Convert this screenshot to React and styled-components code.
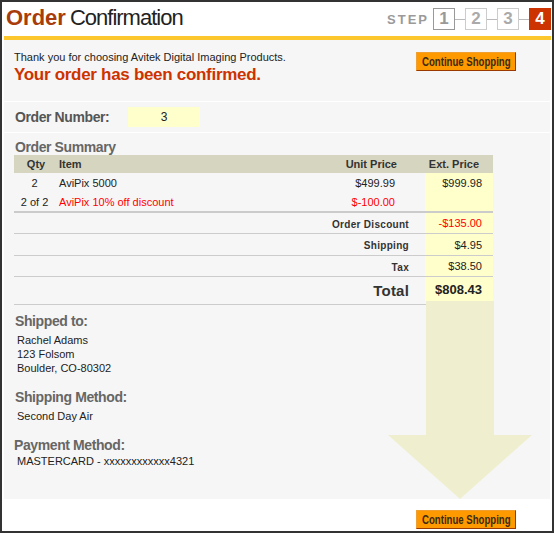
import React from "react";
import styled, { createGlobalStyle } from "styled-components";

const GlobalStyle = createGlobalStyle`
  body {
    margin: 0;
    background: #fff;
    font-family: "Liberation Sans", Arial, Helvetica, sans-serif;
  }
`;

const Frame = styled.div`
  width: 554px;
  height: 533px;
  box-sizing: border-box;
  border: 2px solid #333;
  background: #fff;
  display: flex;
  flex-direction: column;
`;

const Header = styled.div`
  height: 34px;
  flex-shrink: 0;
  display: flex;
  align-items: center;
  justify-content: space-between;
  padding: 0 1px 2px 4px;
  box-sizing: border-box;
`;

const Title = styled.h1`
  margin: 0;
  font-size: 22px;
  line-height: 24px;
  font-weight: normal;
  color: #222;
  letter-spacing: -1px;
  span {
    font-weight: bold;
    color: #a83c0a;
    letter-spacing: 0;
    margin-right: 4px;
  }
`;

const Steps = styled.div`
  display: flex;
  align-items: center;
  padding-top: 2px;
`;

const StepLabel = styled.span`
  font-size: 13px;
  font-weight: bold;
  color: #9a9a9a;
  letter-spacing: 2px;
  margin-right: 4px;
`;

const StepBox = styled.div`
  width: 22px;
  height: 22px;
  box-sizing: border-box;
  display: flex;
  align-items: center;
  justify-content: center;
  font-size: 17px;
  font-weight: bold;
  border: 1px solid ${(p) => (p.$active ? "#cc3300" : p.$done ? "#999" : "#ccc")};
  background: ${(p) => (p.$active ? "#cc3300" : "#fff")};
  color: ${(p) => (p.$active ? "#fff" : p.$done ? "#999" : "#aaa")};
`;

const Connector = styled.div`
  width: 10px;
  height: 1px;
  background: #bbb;
`;

const YellowBar = styled.div`
  height: 4px;
  flex-shrink: 0;
  margin: 0 1px 0 2px;
  background: #fcc72c;
`;

const Content = styled.div`
  flex: 1;
  margin: 0 2px;
  background: #f6f6f6;
  position: relative;
  display: flex;
  flex-direction: column;
`;

const Intro = styled.div`
  height: 62px;
  box-sizing: border-box;
  border-bottom: 1px solid #fff;
  display: flex;
  justify-content: space-between;
  align-items: flex-start;
  padding: 10px 34px 0 10px;
`;

const ThankYou = styled.div`
  font-size: 11px;
  line-height: 14px;
  color: #222;
`;

const Confirmed = styled.div`
  margin-top: 1px;
  font-size: 17px;
  line-height: 20px;
  font-weight: bold;
  color: #cc3300;
  letter-spacing: -0.3px;
`;

const ShopButton = styled.button`
  width: 100px;
  height: 19px;
  box-sizing: border-box;
  margin-top: ${(p) => p.$offset || 0}px;
  padding: 0;
  background: #ff9900;
  border: 1px solid;
  border-color: #f0a030 #9a3a00 #9a3a00 #f0a030;
  display: flex;
  align-items: center;
  justify-content: center;
  overflow: hidden;
  cursor: pointer;
`;

const ShopLabel = styled.span`
  display: inline-block;
  white-space: nowrap;
  font-family: "Liberation Sans", Arial, sans-serif;
  font-size: 12px;
  font-weight: bold;
  color: #3a2a10;
  transform: scaleX(0.8);
`;

const OrderNumberRow = styled.div`
  height: 31px;
  box-sizing: border-box;
  border-bottom: 1px solid #fff;
  display: flex;
  align-items: center;
  padding-left: 11px;
`;

const SectionTitle = styled.div`
  font-size: 14px;
  font-weight: bold;
  color: ${(p) => p.$color || "#666"};
  letter-spacing: -0.4px;
  line-height: ${(p) => p.$lh || 16}px;
  margin-top: ${(p) => p.$mt || 0}px;
  margin-left: ${(p) => p.$ml || 0}px;
  width: ${(p) => (p.$width ? `${p.$width}px` : "auto")};
`;

const NumberBox = styled.div`
  width: 72px;
  height: 20px;
  background: #ffffcc;
  display: flex;
  align-items: center;
  justify-content: center;
  font-size: 12px;
  color: #222;
`;

const Summary = styled.div`
  padding: 7px 0 0 10px;
`;

const Table = styled.div`
  width: 479px;
`;

const Items = styled.div`
  border-bottom: 2px solid #cbcbcb;
`;

const ItemRow = styled.div`
  display: grid;
  grid-template-columns: 41px 1fr 110px 68px;
  height: ${(p) => p.$height || 19}px;
  background: ${(p) => (p.$head ? "#d6d6c0" : "transparent")};
  font-size: 11px;
  font-weight: ${(p) => (p.$head ? "bold" : "normal")};
  color: ${(p) => (p.$head ? "#333" : "#222")};
`;

const Cell = styled.div`
  display: flex;
  align-items: center;
  justify-content: ${(p) => (p.$align === "center" ? "center" : p.$align === "right" ? "flex-end" : "flex-start")};
  padding-left: ${(p) => p.$pl || 0}px;
  padding-right: ${(p) => p.$pr || 0}px;
  color: ${(p) => (p.$red ? "#ff0000" : "inherit")};
  background: ${(p) => (p.$highlight ? "#ffffcc" : "transparent")};
  white-space: nowrap;
`;

const TotalRow = styled.div`
  display: grid;
  grid-template-columns: 1fr 68px;
  height: ${(p) => p.$height}px;
  border-bottom: 1px solid #cccccc;
`;

const TotalLabel = styled.div`
  display: flex;
  align-items: center;
  justify-content: flex-end;
  padding-right: 16px;
  font-weight: bold;
  color: #333;
  font-size: ${(p) => (p.$big ? 15 : 10)}px;
  letter-spacing: ${(p) => (p.$big ? 0.2 : 0.3)}px;
  padding-top: ${(p) => (p.$big ? 0 : 2)}px;
`;

const TotalValue = styled.div`
  display: flex;
  align-items: center;
  justify-content: flex-end;
  padding-right: 11px;
  background: #ffffcc;
  font-size: ${(p) => (p.$big ? 13 : 11)}px;
  font-weight: ${(p) => (p.$big ? "bold" : "normal")};
  color: ${(p) => (p.$red ? "#ff0000" : "#222")};
  padding-bottom: ${(p) => (p.$big ? 2 : 0)}px;
`;

const Details = styled.div`
  padding: 8px 0 0 11px;
`;

const DetailText = styled.div`
  font-size: 11px;
  line-height: 14px;
  color: #222;
  padding-left: 2px;
  margin-top: ${(p) => p.$mt || 0}px;
`;

const Arrow = styled.svg`
  position: absolute;
  right: 18px;
  bottom: 0;
  width: 144px;
  height: 198px;
`;

const Footer = styled.div`
  height: 32px;
  flex-shrink: 0;
  box-sizing: border-box;
  display: flex;
  justify-content: flex-end;
  align-items: flex-start;
  padding: 11px 36px 0 0;
`;

const items = [
  { qty: "2", name: "AviPix 5000", unit: "$499.99", ext: "$999.98" },
  { qty: "2 of 2", name: "AviPix 10% off discount", unit: "$-100.00", ext: "", red: true },
];

const totals = [
  { label: "Order Discount", value: "-$135.00", red: true, height: 20 },
  { label: "Shipping", value: "$4.95", height: 21 },
  { label: "Tax", value: "$38.50", height: 20 },
  { label: "Total", value: "$808.43", big: true, height: 27 },
];

export default function App() {
  return (
    <>
      <GlobalStyle />
      <Frame>
        <Header>
          <Title>
            <span>Order</span>Confirmation
          </Title>
          <Steps>
            <StepLabel>STEP</StepLabel>
            <StepBox $done>1</StepBox>
            <Connector />
            <StepBox>2</StepBox>
            <Connector />
            <StepBox>3</StepBox>
            <Connector />
            <StepBox $active>4</StepBox>
          </Steps>
        </Header>
        <YellowBar />
        <Content>
          <Arrow viewBox="0 0 144 198">
            <rect x="38" y="0" width="68" height="135" fill="#efefd0" />
            <polygon points="0,134 144,134 72,198" fill="#efefd0" />
          </Arrow>
          <Intro>
            <div>
              <ThankYou>Thank you for choosing Avitek Digital Imaging Products.</ThankYou>
              <Confirmed>Your order has been confirmed.</Confirmed>
            </div>
            <ShopButton $offset={2}>
              <ShopLabel>Continue Shopping</ShopLabel>
            </ShopButton>
          </Intro>
          <OrderNumberRow>
            <SectionTitle $width={113} $lh={20} $color="#555">Order Number:</SectionTitle>
            <NumberBox>3</NumberBox>
          </OrderNumberRow>
          <Summary>
            <SectionTitle $lh={15} $ml={1}>Order Summary</SectionTitle>
            <Table>
              <ItemRow $head $height={18}>
                <Cell $align="center" $pl={3}>Qty</Cell>
                <Cell $pl={4}>Item</Cell>
                <Cell $align="right" $pr={28}>Unit Price</Cell>
                <Cell $align="right" $pr={14}>Ext. Price</Cell>
              </ItemRow>
              <Items>
                {items.map((it) => (
                  <ItemRow key={it.name}>
                    <Cell $align="center">{it.qty}</Cell>
                    <Cell $pl={4} $red={it.red}>{it.name}</Cell>
                    <Cell $align="right" $pr={30} $red={it.red}>{it.unit}</Cell>
                    <Cell $align="right" $pr={11} $highlight>{it.ext}</Cell>
                  </ItemRow>
                ))}
              </Items>
              {totals.map((t) => (
                <TotalRow key={t.label} $height={t.height}>
                  <TotalLabel $big={t.big}>{t.label}</TotalLabel>
                  <TotalValue $big={t.big} $red={t.red}>{t.value}</TotalValue>
                </TotalRow>
              ))}
            </Table>
          </Summary>
          <Details>
            <SectionTitle>Shipped to:</SectionTitle>
            <DetailText $mt={4}>Rachel Adams</DetailText>
            <DetailText>123 Folsom</DetailText>
            <DetailText>Boulder, CO-80302</DetailText>
            <SectionTitle $mt={14}>Shipping Method:</SectionTitle>
            <DetailText $mt={4}>Second Day Air</DetailText>
            <SectionTitle $mt={14} $ml={-1}>Payment Method:</SectionTitle>
            <DetailText $mt={1}>MASTERCARD - xxxxxxxxxxxx4321</DetailText>
          </Details>
        </Content>
        <Footer>
          <ShopButton>
            <ShopLabel>Continue Shopping</ShopLabel>
          </ShopButton>
        </Footer>
      </Frame>
    </>
  );
}
